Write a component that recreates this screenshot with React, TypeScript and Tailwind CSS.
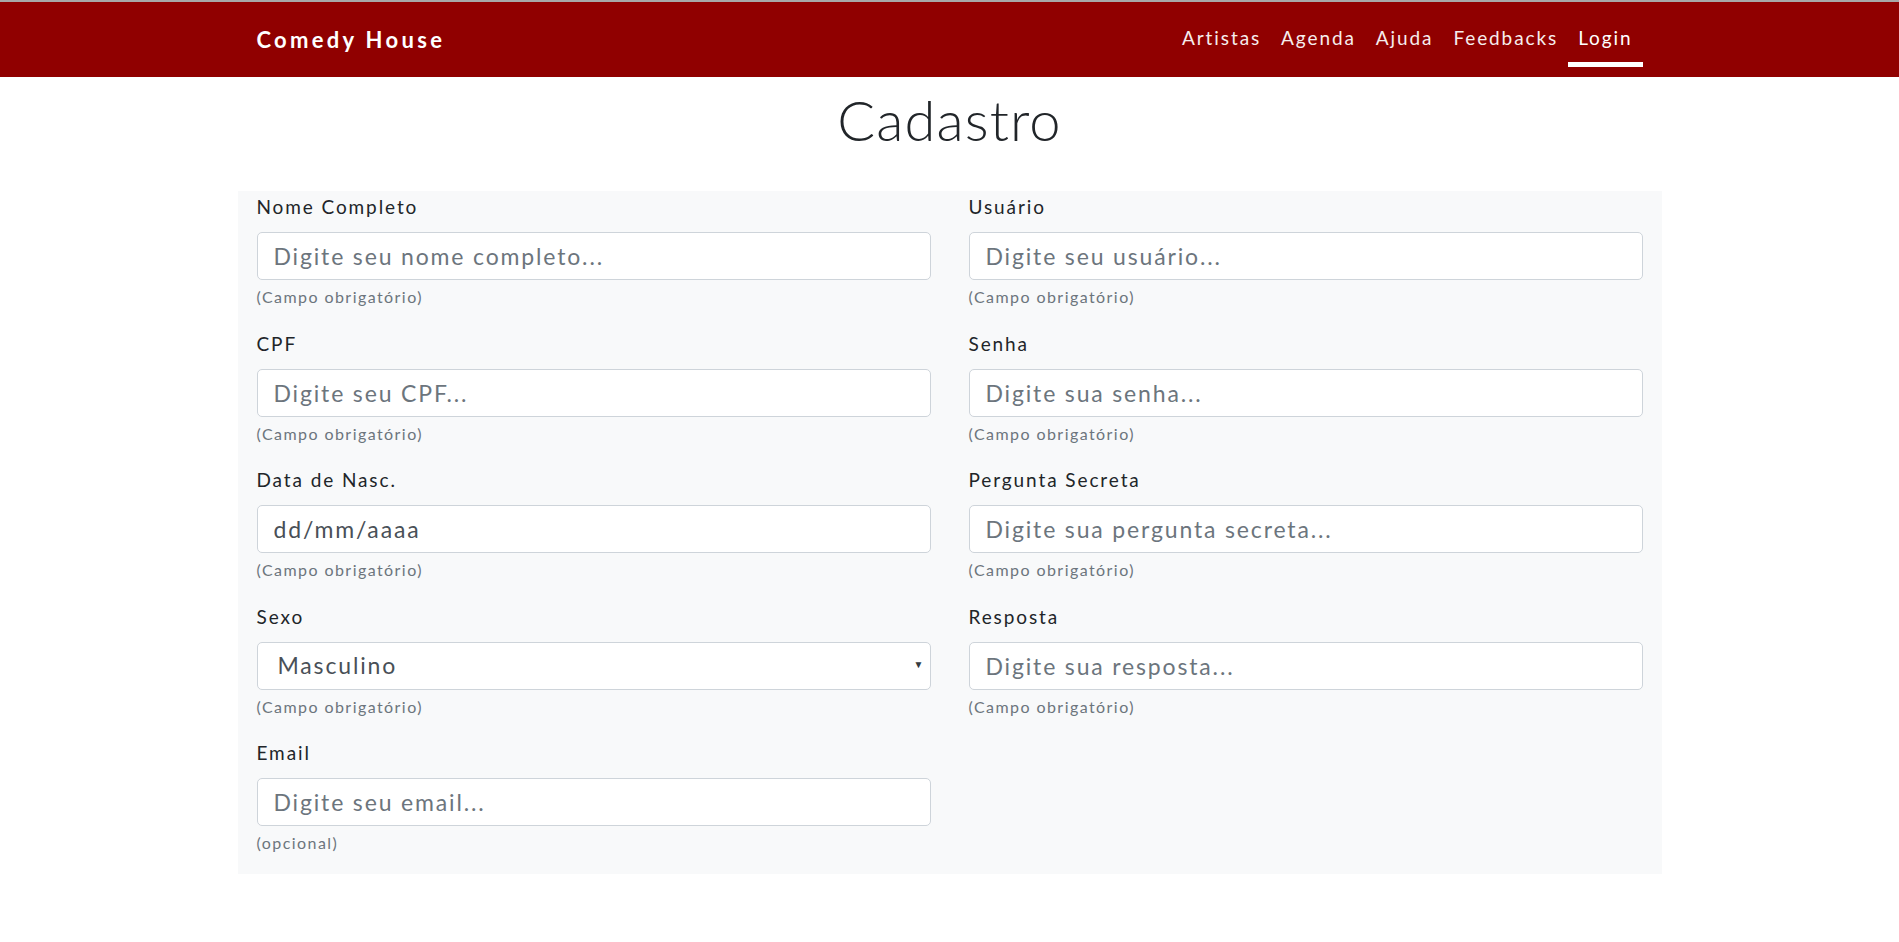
import { useState } from "react";

const NAV_LINKS = ["Artistas", "Agenda", "Ajuda", "Feedbacks", "Login"];

type Field = {
  label: string;
  placeholder?: string;
  hint: string;
  kind?: "date" | "select";
};

// left / right columns, rendered row by row
const ROWS: [Field, Field | null][] = [
  [
    { label: "Nome Completo", placeholder: "Digite seu nome completo...", hint: "(Campo obrigatório)" },
    { label: "Usuário", placeholder: "Digite seu usuário...", hint: "(Campo obrigatório)" },
  ],
  [
    { label: "CPF", placeholder: "Digite seu CPF...", hint: "(Campo obrigatório)" },
    { label: "Senha", placeholder: "Digite sua senha...", hint: "(Campo obrigatório)" },
  ],
  [
    { label: "Data de Nasc.", hint: "(Campo obrigatório)", kind: "date" },
    { label: "Pergunta Secreta", placeholder: "Digite sua pergunta secreta...", hint: "(Campo obrigatório)" },
  ],
  [
    { label: "Sexo", hint: "(Campo obrigatório)", kind: "select" },
    { label: "Resposta", placeholder: "Digite sua resposta...", hint: "(Campo obrigatório)" },
  ],
  [{ label: "Email", placeholder: "Digite seu email...", hint: "(opcional)" }, null],
];

const inputClass =
  "block w-full h-[48px] px-[16px] bg-white border border-[#ced4da] rounded-[5px] text-[23px] tracking-[0.08em] text-[#495057] placeholder:text-[#6c757d] outline-none";

function FormField({ field }: { field: Field }) {
  const [sexo, setSexo] = useState("Masculino");

  return (
    <div>
      <label className="block h-[26px] leading-[26px] mb-[12px] text-[19px] tracking-[0.1em] text-[#212529]">
        {field.label}
      </label>
      {field.kind === "select" ? (
        <div className="relative">
          <select
            value={sexo}
            onChange={(e) => setSexo(e.target.value)}
            className={inputClass + " appearance-none pl-[20px] text-[#495057]"}
          >
            <option>Masculino</option>
            <option>Feminino</option>
            <option>Outro</option>
          </select>
          <span className="pointer-events-none absolute right-[7px] top-[15px] text-[10px] text-[#343a40]">▼</span>
        </div>
      ) : field.kind === "date" ? (
        <input type="text" readOnly value="dd/mm/aaaa" className={inputClass} />
      ) : (
        <input type="text" placeholder={field.placeholder} className={inputClass} />
      )}
      <small className="block mt-[6px] h-[22px] leading-[22px] text-[16px] tracking-[0.09em] text-[#6c757d]">
        {field.hint}
      </small>
    </div>
  );
}

export default function App() {
  return (
    <div className="min-h-screen bg-white font-['Lato','Noto_Sans',sans-serif]">
      <nav className="h-[77px] border-t-2 border-[#a8a8a8] bg-[#900000]">
        <div className="mx-auto flex h-full w-[1386px] items-center justify-between">
          <a href="#" className="text-[22px] font-bold tracking-[0.15em] text-white">
            Comedy House
          </a>
          <ul className="flex h-full items-stretch">
            {NAV_LINKS.map((link) => (
              <li key={link} className="flex">
                <a
                  href="#"
                  className={
                    "flex items-center px-[10px] pt-[12px] mb-[10px] text-[19px] tracking-[0.1em] border-b-[5px] " +
                    (link === "Login" ? "text-white border-white" : "text-[#f6eded] border-transparent")
                  }
                >
                  {link}
                </a>
              </li>
            ))}
          </ul>
        </div>
      </nav>

      <h1 className="pt-[9px] pb-[38px] text-center text-[56px] leading-[67px] font-light tracking-[0.02em] text-[#212529]">
        Cadastro
      </h1>

      <form className="mx-auto w-[1424px] bg-[#f8f9fa] px-[19px] pt-[3px] pb-[20px]">
        <div className="grid grid-cols-2 gap-x-[38px] gap-y-[22.5px]">
          {ROWS.map(([left, right], i) => (
            <div key={i} className="contents">
              <FormField field={left} />
              {right ? <FormField field={right} /> : <div />}
            </div>
          ))}
        </div>
      </form>
    </div>
  );
}
